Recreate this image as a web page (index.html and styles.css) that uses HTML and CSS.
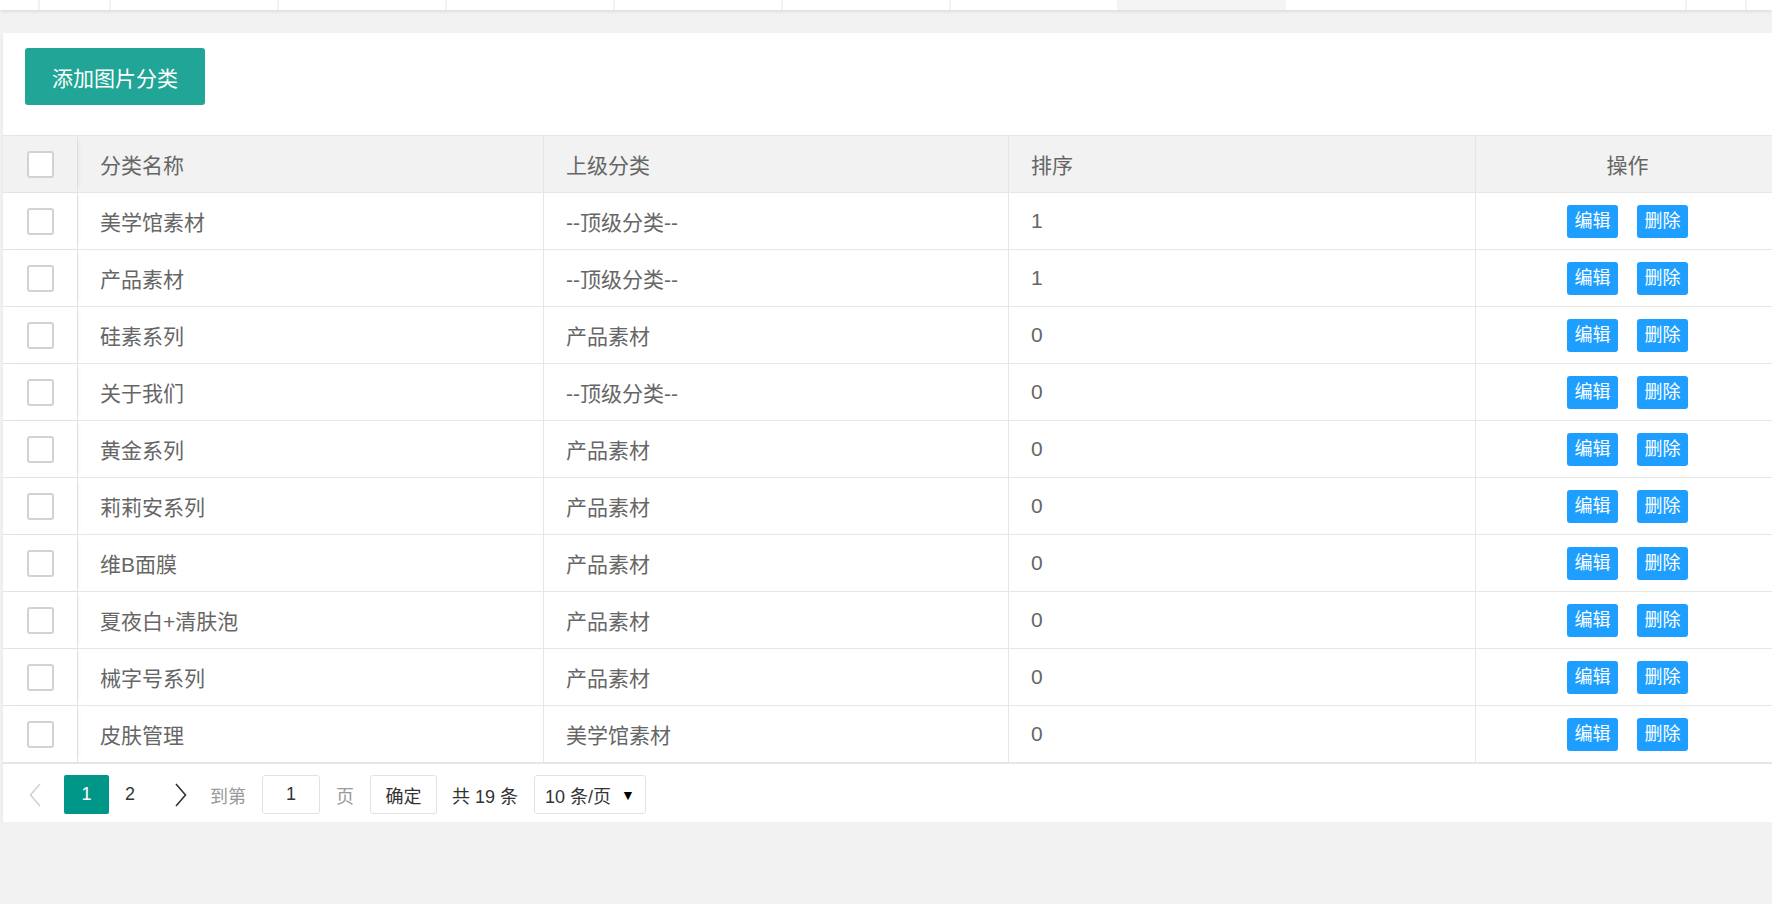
FILE: index.html
```html
<!DOCTYPE html>
<html lang="zh-CN">
<head>
    <meta charset="UTF-8">
    <title>图片分类</title>
    <link rel="stylesheet" href="styles.css">
</head>
<body>
    <!-- 顶部标签栏（只露出底边） -->
    <div class="tabbar">
        <div class="tab tab-home"></div>
        <div class="tab tab-arrow"></div>
        <div class="tab"></div>
        <div class="tab"></div>
        <div class="tab"></div>
        <div class="tab"></div>
        <div class="tab"></div>
        <div class="tab"></div>
        <div class="tab tab-this"></div>
        <div class="tab-space"></div>
        <div class="tab tab-more"></div>
        <div class="tab tab-end"></div>
    </div>

    <div class="card">
        <div class="toolbar">
            <button class="btn-main">添加图片分类</button>
        </div>

        <div class="grid">
            <div class="row head">
                <div class="cell check"><span class="checkbox"></span></div>
                <div class="cell">分类名称</div>
                <div class="cell">上级分类</div>
                <div class="cell">排序</div>
                <div class="cell center">操作</div>
            </div>
            <div class="row">
                <div class="cell check"><span class="checkbox"></span></div>
                <div class="cell">美学馆素材</div>
                <div class="cell">--顶级分类--</div>
                <div class="cell">1</div>
                <div class="cell center"><button class="btn-xs">编辑</button><button class="btn-xs">删除</button></div>
            </div>
            <div class="row">
                <div class="cell check"><span class="checkbox"></span></div>
                <div class="cell">产品素材</div>
                <div class="cell">--顶级分类--</div>
                <div class="cell">1</div>
                <div class="cell center"><button class="btn-xs">编辑</button><button class="btn-xs">删除</button></div>
            </div>
            <div class="row">
                <div class="cell check"><span class="checkbox"></span></div>
                <div class="cell">硅素系列</div>
                <div class="cell">产品素材</div>
                <div class="cell">0</div>
                <div class="cell center"><button class="btn-xs">编辑</button><button class="btn-xs">删除</button></div>
            </div>
            <div class="row">
                <div class="cell check"><span class="checkbox"></span></div>
                <div class="cell">关于我们</div>
                <div class="cell">--顶级分类--</div>
                <div class="cell">0</div>
                <div class="cell center"><button class="btn-xs">编辑</button><button class="btn-xs">删除</button></div>
            </div>
            <div class="row">
                <div class="cell check"><span class="checkbox"></span></div>
                <div class="cell">黄金系列</div>
                <div class="cell">产品素材</div>
                <div class="cell">0</div>
                <div class="cell center"><button class="btn-xs">编辑</button><button class="btn-xs">删除</button></div>
            </div>
            <div class="row">
                <div class="cell check"><span class="checkbox"></span></div>
                <div class="cell">莉莉安系列</div>
                <div class="cell">产品素材</div>
                <div class="cell">0</div>
                <div class="cell center"><button class="btn-xs">编辑</button><button class="btn-xs">删除</button></div>
            </div>
            <div class="row">
                <div class="cell check"><span class="checkbox"></span></div>
                <div class="cell">维B面膜</div>
                <div class="cell">产品素材</div>
                <div class="cell">0</div>
                <div class="cell center"><button class="btn-xs">编辑</button><button class="btn-xs">删除</button></div>
            </div>
            <div class="row">
                <div class="cell check"><span class="checkbox"></span></div>
                <div class="cell">夏夜白+清肤泡</div>
                <div class="cell">产品素材</div>
                <div class="cell">0</div>
                <div class="cell center"><button class="btn-xs">编辑</button><button class="btn-xs">删除</button></div>
            </div>
            <div class="row">
                <div class="cell check"><span class="checkbox"></span></div>
                <div class="cell">械字号系列</div>
                <div class="cell">产品素材</div>
                <div class="cell">0</div>
                <div class="cell center"><button class="btn-xs">编辑</button><button class="btn-xs">删除</button></div>
            </div>
            <div class="row">
                <div class="cell check"><span class="checkbox"></span></div>
                <div class="cell">皮肤管理</div>
                <div class="cell">美学馆素材</div>
                <div class="cell">0</div>
                <div class="cell center"><button class="btn-xs">编辑</button><button class="btn-xs">删除</button></div>
            </div>
        </div>

        <!-- 分页 -->
        <div class="pager">
            <span class="page-prev">
                <svg width="12" height="24" viewBox="0 0 12 24"><path d="M11 1 L1.5 12 L11 23" fill="none" stroke="#d2d2d2" stroke-width="1.6"/></svg>
            </span>
            <span class="page-curr">1</span>
            <span class="page-num">2</span>
            <span class="page-next">
                <svg width="12" height="24" viewBox="0 0 12 24"><path d="M1 1 L10.5 12 L1 23" fill="none" stroke="#333" stroke-width="1.6"/></svg>
            </span>
            <span class="page-label">到第</span>
            <span class="page-input">1</span>
            <span class="page-label">页</span>
            <span class="page-btn">确定</span>
            <span class="page-count">共 19 条</span>
            <span class="page-limit">10 条/页<i class="arrow">▼</i></span>
        </div>
    </div>
</body>
</html>
```

FILE: styles.css
```css
/* 页面基础 */
html, body {
    margin: 0;
    overflow: hidden;
}

body {
    background: #f2f2f2;
    font-family: "Liberation Sans", "Noto Sans CJK SC", sans-serif;
    color: #666;
}

/* 顶部标签栏 */
.tabbar {
    display: flex;
    height: 10px;
    background: #fff;
    box-shadow: 0 1px 4px rgba(0, 0, 0, 0.12);
}

.tab {
    width: 168px;
    border-left: 2px solid #f2f2f2;
    box-sizing: border-box;
}

.tab-home {
    width: 38px;
    border-left: none;
}

.tab-arrow {
    width: 71px;
}

.tab-this {
    width: 169px;
    background: #f4f4f4;
    border-left: none;
}

.tab-space {
    flex: 1;
}

.tab-more {
    width: 60px;
}

.tab-end {
    width: 27px;
}

/* 卡片 */
.card {
    margin: 23px 0 0 3px;
    width: 1776px;
    background: #fff;
    box-shadow: 0 2px 4px rgba(0, 0, 0, 0.06);
}

.toolbar {
    padding: 15px 22px 30px;
}

.btn-main {
    height: 57px;
    padding: 0 27px;
    border: none;
    border-radius: 3px;
    background: #20a596;
    color: #fff;
    font-family: inherit;
    font-size: 21px;
    cursor: pointer;
}

/* 表格 */
.grid {
    border-top: 1px solid #e6e6e6;
}

.row {
    display: grid;
    grid-template-columns: 74px 466px 465px 467px 304px;
    height: 56px;
    border-bottom: 1px solid #e6e6e6;
}

.row.head {
    background: #f2f2f2;
}

.cell {
    display: flex;
    align-items: center;
    padding: 0 22px;
    font-size: 21px;
    color: #666;
    border-left: 1px solid #e6e6e6;
    white-space: nowrap;
}

.cell.check {
    padding: 0;
    justify-content: center;
    border-left: none;
    position: relative;
    z-index: 1;
    box-shadow: 3px 0 6px -3px rgba(0, 0, 0, 0.08);
}

.cell.center {
    justify-content: center;
}

.checkbox {
    width: 23px;
    height: 23px;
    border: 2px solid #d2d2d2;
    border-radius: 3px;
    background: #fff;
}

.btn-xs {
    height: 33px;
    padding: 0 7.5px;
    border: none;
    border-radius: 3px;
    background: #1e9fff;
    color: #fff;
    font-family: inherit;
    font-size: 18px;
    line-height: 33px;
    cursor: pointer;
}

.btn-xs + .btn-xs {
    margin-left: 19px;
}

/* 分页 */
.pager {
    display: flex;
    align-items: center;
    border-top: 1px solid #e6e6e6;
    padding: 11px 0 8px;
    font-size: 18px;
    color: #333;
}

.pager > span {
    display: inline-flex;
    align-items: center;
    justify-content: center;
    height: 39px;
    box-sizing: border-box;
}

.page-prev {
    margin-left: 26px;
    width: 12px;
}

.page-curr {
    margin-left: 23px;
    width: 45px;
    background: #009688;
    color: #fff;
    border-radius: 2px;
}

.page-num {
    width: 42px;
}

.page-next {
    margin-left: 24px;
    width: 12px;
}

.page-label {
    margin-left: 23px;
    color: #999;
}

.page-label + .page-input,
.page-input + .page-label,
.page-label + .page-btn {
    margin-left: 16px;
}

.page-input {
    width: 58px;
    border: 1.5px solid #e2e2e2;
    border-radius: 3px;
}

.page-btn {
    width: 67px;
    border: 1.5px solid #e2e2e2;
    border-radius: 3px;
}

.page-count {
    margin-left: 15px;
}

.page-limit {
    margin-left: 16px;
    width: 112px;
    border: 1.5px solid #e2e2e2;
    border-radius: 3px;
    color: #333;
}

.arrow {
    font-style: normal;
    font-size: 14px;
    color: #000;
    margin-left: 10px;
}
```
